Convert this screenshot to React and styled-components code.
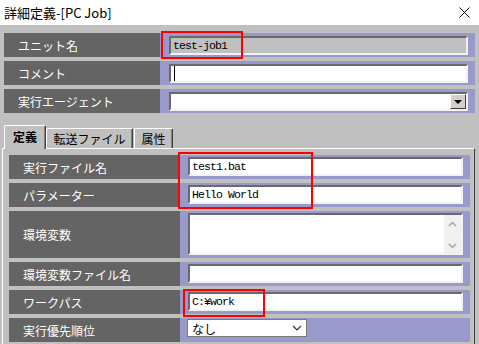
import React from 'react';
import styled, { createGlobalStyle } from 'styled-components';

const GlobalStyle = createGlobalStyle`
  html, body {
    margin: 0;
    padding: 0;
    background: #c0c0c0;
  }
  * {
    box-sizing: border-box;
  }
`;

const Window = styled.div`
  position: relative;
  width: 479px;
  height: 344px;
  overflow: hidden;
  display: flex;
  flex-direction: column;
  background: #c0c0c0;
  font-family: "Noto Sans CJK JP", "Noto Sans", sans-serif;
`;

const TitleBar = styled.div`
  flex-shrink: 0;
  height: 25px;
  display: flex;
  align-items: center;
  justify-content: space-between;
  padding: 0 9px 0 4px;
  background: #fff;
  color: #000;
  font-size: 13px;
`;

const CloseIcon = () => (
  <svg width="11" height="11" viewBox="0 0 11 11">
    <path d="M0.5 0.5 L10.5 10.5 M10.5 0.5 L0.5 10.5" stroke="#000" strokeWidth="1" />
  </svg>
);

const TopForm = styled.div`
  display: flex;
  flex-direction: column;
  gap: 4px;
  padding: 8px 4px 0 4px;
`;

const Row = styled.div`
  display: grid;
  grid-template-columns: ${(p) => p.$labelWidth}px 1fr;
  height: ${(p) => p.$height || 24}px;
`;

const Label = styled.div`
  display: flex;
  align-items: center;
  padding-left: 14px;
  background: #646464;
  color: #fff;
  font-size: 12px;
  white-space: nowrap;
`;

const ValueCell = styled.div`
  display: flex;
  align-items: flex-start;
  background: #9999cc;
  padding: ${(p) => p.$pad};
`;

const TextBox = styled.div`
  position: relative;
  flex: 1;
  height: ${(p) => p.$height || 19}px;
  display: flex;
  align-items: ${(p) => (p.$multi ? 'flex-start' : 'center')};
  padding-left: 2px;
  background: ${(p) => (p.$disabled ? '#c0c0c0' : '#fff')};
  border-top: 2px solid #6a6a6a;
  border-left: 2px solid #6a6a6a;
  border-right: 2px solid #f2f2f2;
  border-bottom: 2px solid #f2f2f2;
  color: #000;
  font-family: "Liberation Mono", "Noto Sans CJK JP", monospace;
  font-size: 11.5px;
  letter-spacing: -0.9px;
`;

const Caret = styled.span`
  display: block;
  width: 1px;
  height: 15px;
  margin-left: 1px;
  background: #000;
`;

const DropButton = styled.div`
  position: absolute;
  right: 0;
  top: 0;
  width: 16px;
  height: 15px;
  display: flex;
  align-items: center;
  justify-content: center;
  background: #d4d0c8;
  border-top: 1px solid #fff;
  border-left: 1px solid #fff;
  border-right: 1px solid #404040;
  border-bottom: 1px solid #404040;

  &::after {
    content: '';
    border-left: 4px solid transparent;
    border-right: 4px solid transparent;
    border-top: 4px solid #000;
  }
`;

const ScrollBar = styled.div`
  position: absolute;
  right: 0;
  top: 0;
  bottom: 0;
  width: 17px;
  display: flex;
  flex-direction: column;
  justify-content: space-between;
  align-items: center;
  padding: 6px 0 4px;
  background: #f0f0f0;
`;

const Chevron = ({ dir }) => (
  <svg width="9" height="6" viewBox="0 0 9 6">
    <path
      d={dir === 'up' ? 'M1 5 L4.5 1.5 L8 5' : 'M1 1 L4.5 4.5 L8 1'}
      fill="none"
      stroke="#a6a6a6"
      strokeWidth="1.5"
    />
  </svg>
);

const TabStrip = styled.div`
  display: flex;
  align-items: flex-end;
  height: 23px;
  margin-top: 12px;
  padding-left: 4px;
  position: relative;
  z-index: 1;
`;

const Tab = styled.div`
  width: ${(p) => p.$width}px;
  height: ${(p) => (p.$active ? 24 : 20)}px;
  margin-left: ${(p) => p.$gap || 0}px;
  margin-bottom: ${(p) => (p.$active ? -1 : 0)}px;
  display: flex;
  align-items: center;
  justify-content: center;
  padding-bottom: ${(p) => (p.$active ? 2 : 0)}px;
  background: #c0c0c0;
  border-top: 1px solid #fff;
  border-left: 1px solid #fff;
  border-right: 1px solid #404040;
  box-shadow: inset -1px 0 #808080;
  border-radius: 2px 2px 0 0;
  font-size: 12px;
  font-weight: ${(p) => (p.$active ? 700 : 400)};
  color: #000;
`;

const Panel = styled.div`
  flex: 1;
  margin: 0 4px 0 2px;
  padding: 6px 4px 0 6px;
  border-top: 1px solid #fff;
  border-left: 1px solid #fff;
  border-right: 1px solid #404040;
  display: flex;
  flex-direction: column;
  gap: 4px;
`;

const Select = styled.div`
  width: 120px;
  height: 18px;
  margin-top: 1px;
  display: flex;
  align-items: center;
  justify-content: space-between;
  padding: 0 4px 0 4px;
  background: #fff;
  border: 1px solid #7a7a7a;
  color: #000;
  font-size: 12px;
`;

const Annotation = styled.div`
  position: absolute;
  left: ${(p) => p.$x}px;
  top: ${(p) => p.$y}px;
  width: ${(p) => p.$w}px;
  height: ${(p) => p.$h}px;
  border: 2px solid #ff0000;
  pointer-events: none;
  z-index: 5;
`;

const topPad = '3px 7px 2px 9px';
const panelPad = '2px 7px 3px 8px';

export default function App() {
  return (
    <>
      <GlobalStyle />
      <Window>
        <TitleBar>
          <span>詳細定義-[PC Job]</span>
          <CloseIcon />
        </TitleBar>

        <TopForm>
          <Row $labelWidth={156}>
            <Label>ユニット名</Label>
            <ValueCell $pad={topPad}>
              <TextBox $disabled>test-job1</TextBox>
            </ValueCell>
          </Row>
          <Row $labelWidth={156}>
            <Label>コメント</Label>
            <ValueCell $pad={topPad}>
              <TextBox>
                <Caret />
              </TextBox>
            </ValueCell>
          </Row>
          <Row $labelWidth={156}>
            <Label>実行エージェント</Label>
            <ValueCell $pad={topPad}>
              <TextBox>
                <DropButton />
              </TextBox>
            </ValueCell>
          </Row>
        </TopForm>

        <TabStrip>
          <Tab $active $width={42}>定義</Tab>
          <Tab $width={87}>転送ファイル</Tab>
          <Tab $width={39} $gap={1}>属性</Tab>
        </TabStrip>

        <Panel>
          <Row $labelWidth={171}>
            <Label>実行ファイル名</Label>
            <ValueCell $pad={panelPad}>
              <TextBox>test1.bat</TextBox>
            </ValueCell>
          </Row>
          <Row $labelWidth={171}>
            <Label>パラメーター</Label>
            <ValueCell $pad={panelPad}>
              <TextBox>Hello World</TextBox>
            </ValueCell>
          </Row>
          <Row $labelWidth={171} $height={47}>
            <Label>環境変数</Label>
            <ValueCell $pad={panelPad}>
              <TextBox $multi $height={42}>
                <ScrollBar>
                  <Chevron dir="up" />
                  <Chevron dir="down" />
                </ScrollBar>
              </TextBox>
            </ValueCell>
          </Row>
          <Row $labelWidth={171}>
            <Label>環境変数ファイル名</Label>
            <ValueCell $pad={panelPad}>
              <TextBox />
            </ValueCell>
          </Row>
          <Row $labelWidth={171}>
            <Label>ワークパス</Label>
            <ValueCell $pad={panelPad}>
              <TextBox>C:¥work</TextBox>
            </ValueCell>
          </Row>
          <Row $labelWidth={171}>
            <Label>実行優先順位</Label>
            <ValueCell $pad="0 7px 0 7px">
              <Select>
                <span>なし</span>
                <svg width="10" height="6" viewBox="0 0 10 6">
                  <path d="M1 1 L5 5 L9 1" fill="none" stroke="#333" strokeWidth="1.2" />
                </svg>
              </Select>
            </ValueCell>
          </Row>
        </Panel>

        <Annotation $x={161} $y={31} $w={82} $h={28} />
        <Annotation $x={178} $y={152} $w={135} $h={57} />
        <Annotation $x={183} $y={289} $w={82} $h={28} />
      </Window>
    </>
  );
}
